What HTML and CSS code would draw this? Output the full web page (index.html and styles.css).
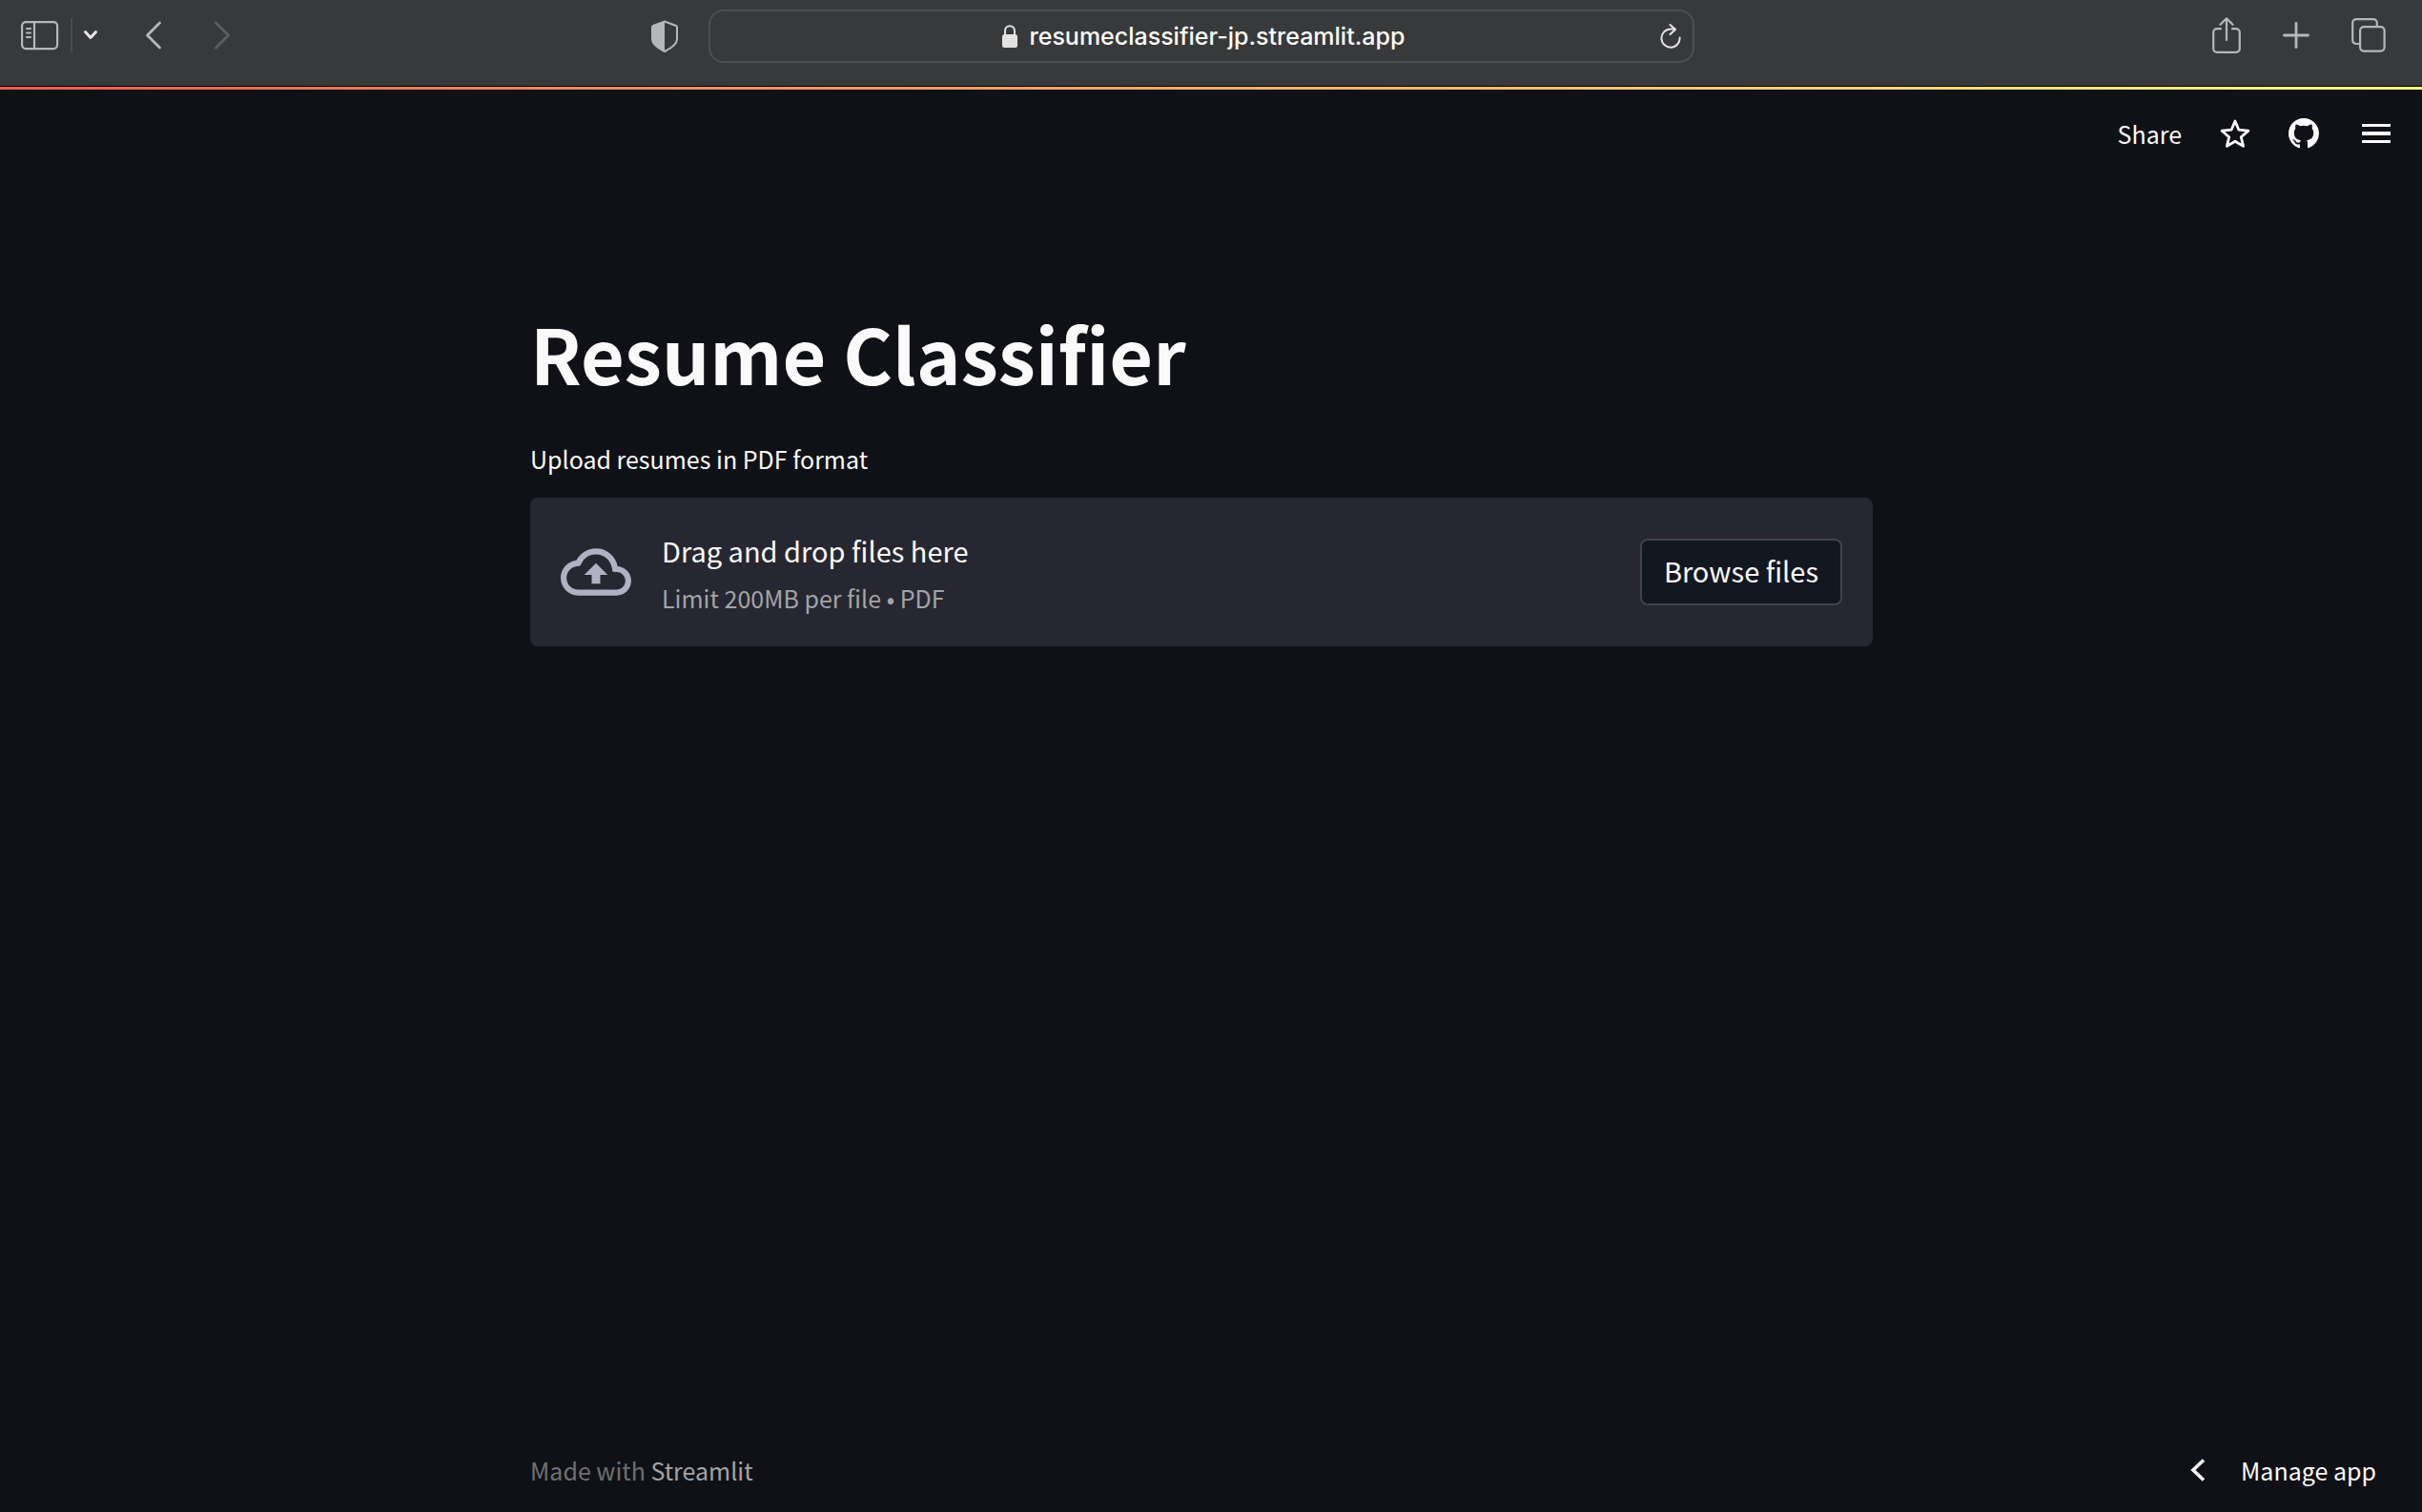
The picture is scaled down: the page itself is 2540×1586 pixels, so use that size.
FILE: index.html
```html
<!DOCTYPE html>
<html lang="en">
<head>
<meta charset="utf-8">
<meta name="viewport" content="width=device-width, initial-scale=1">
<title>Resume Classifier</title>
<link rel="stylesheet" href="styles.css">
</head>
<body>
<header class="browser">
  <div class="browser-start">
    <button class="icon-button" type="button" aria-label="Show sidebar">
      <svg width="40" height="32" viewBox="0 0 40 32" fill="none" stroke="currentColor" stroke-width="2.2"><rect x="1.1" y="2.1" width="37" height="28" rx="4"/><path d="M14 2v28M6 9h4M6 13.500h4M6 18h4" stroke-linecap="round"/></svg>
    </button>
    <span class="divider"></span>
    <button class="icon-button menu-arrow" type="button" aria-label="Sidebar menu">
      <svg width="16" height="12" viewBox="0 0 16 12" fill="none" stroke="currentColor" stroke-width="3" stroke-linecap="round" stroke-linejoin="round"><path d="M2.500 2.500 8 8.500l5.500-6"/></svg>
    </button>
    <button class="icon-button back" type="button" aria-label="Back">
      <svg width="18" height="30" viewBox="0 0 18 30" fill="none" stroke="currentColor" stroke-width="2.800" stroke-linecap="round" stroke-linejoin="round"><path d="M15.500 2 2.500 15l13 13"/></svg>
    </button>
    <button class="icon-button forward" type="button" aria-label="Forward" disabled>
      <svg width="18" height="30" viewBox="0 0 18 30" fill="none" stroke="currentColor" stroke-width="2.800" stroke-linecap="round" stroke-linejoin="round"><path d="m2.500 2 13 13-13 13"/></svg>
    </button>
  </div>
  <div class="browser-center">
    <button class="icon-button" type="button" aria-label="Privacy report">
      <svg width="28" height="34" viewBox="0 0 28 34"><path d="M14 1.500 26 6q1 .4 1 1.500V20c0 5-5 9-13 13C6 29 1 25 1 20V7.500Q1 6.400 2 6Z" fill="none" stroke="currentColor" stroke-width="2"/><path d="M14 1v32C6 29 1 25 1 20V7.500Q1 6.400 2 6Z" fill="currentColor"/></svg>
    </button>
    <div class="address">
      <div class="address-text">
        <svg class="lock" width="16" height="24" viewBox="0 0 16 24"><rect y="10" width="16" height="14" rx="2.500" fill="currentColor"/><path d="M3 11V6.500C3 3.500 5 1.200 8 1.200s5 2.300 5 5.300V11" fill="none" stroke="currentColor" stroke-width="2"/></svg>
        <input class="url" type="text" aria-label="Address" value="resumeclassifier-jp.streamlit.app">
      </div>
      <button class="icon-button reload" type="button" aria-label="Reload">
        <svg width="22" height="26" viewBox="0 0 22 26" fill="none" stroke="currentColor" stroke-width="2" stroke-linecap="round" stroke-linejoin="round"><path d="M20.600 14.500a9.600 9.600 0 1 1-9.600-9H16M10.500 1l5.500 5-5.500 5"/></svg>
      </button>
    </div>
  </div>
  <div class="browser-end">
    <button class="icon-button" type="button" aria-label="Share page">
      <svg width="30" height="38" viewBox="0 0 30 38" fill="none" stroke="currentColor" stroke-width="2.200" stroke-linecap="round" stroke-linejoin="round"><path d="M9 12.200H5a3.800 3.800 0 0 0-3.800 3.800v17A3.800 3.800 0 0 0 5 36.800h20a3.800 3.800 0 0 0 3.800-3.800V16a3.800 3.800 0 0 0-3.800-3.800h-4M15 24V2M8.500 7.800 15 1.300l6.500 6.500"/></svg>
    </button>
    <button class="icon-button" type="button" aria-label="New tab">
      <svg width="28" height="28" viewBox="0 0 28 28" fill="none" stroke="currentColor" stroke-width="2.800" stroke-linecap="round"><path d="M14 1.500v25M1.500 14h25"/></svg>
    </button>
    <button class="icon-button" type="button" aria-label="Show all tabs">
      <svg width="36" height="36" viewBox="0 0 36 36" fill="none" stroke="currentColor" stroke-width="2.200"><rect x="9.100" y="9.100" width="25.500" height="25.500" rx="4"/><path d="M9 27H5a3.800 3.800 0 0 1-3.800-3.800V5A3.800 3.800 0 0 1 5 1.200h18A3.800 3.800 0 0 1 26.800 5v4"/></svg>
    </button>
  </div>
</header>
<div class="decoration"></div>
<nav class="app-bar" aria-label="App">
  <button class="app-button" type="button">Share</button>
  <button class="app-button" type="button" aria-label="Favorite">
    <svg width="32" height="32" viewBox="0 0 32 32" fill="none" stroke="currentColor" stroke-width="2.800" stroke-linejoin="round"><path d="m16 3 3.900 9.200 10 .9-7.600 6.600 2.300 9.700-8.600-5.200-8.600 5.200 2.300-9.700-7.600-6.600 10-.9Z"/></svg>
  </button>
  <a class="app-button" href="#" aria-label="View source on GitHub">
    <svg width="32" height="32" viewBox="0 0 16 16" fill="currentColor"><path d="M8 0C3.580 0 0 3.580 0 8c0 3.540 2.290 6.530 5.470 7.590.4.070.55-.17.55-.38 0-.19-.01-.82-.01-1.490-2.010.37-2.530-.49-2.690-.94-.09-.23-.48-.94-.82-1.130-.28-.15-.68-.52-.01-.53.63-.01 1.080.58 1.230.82.72 1.210 1.870.87 2.330.66.07-.52.28-.87.51-1.070-1.780-.2-3.640-.89-3.640-3.950 0-.87.31-1.590.82-2.150-.08-.2-.36-1.020.08-2.120 0 0 .67-.21 2.200.82.64-.18 1.320-.27 2-.27s1.360.09 2 .27c1.530-1.040 2.200-.82 2.200-.82.44 1.100.16 1.920.08 2.120.51.56.82 1.270.82 2.150 0 3.070-1.870 3.750-3.650 3.950.29.25.54.73.54 1.480 0 1.070-.01 1.930-.01 2.200 0 .21.15.46.55.38A8.010 8.010 0 0 0 16 8c0-4.420-3.580-8-8-8"/></svg>
  </a>
  <button class="app-button menu" type="button" aria-label="Main menu">
    <svg width="30" height="20" viewBox="0 0 30 20" fill="currentColor"><path d="M0 0h30v3H0zM0 8h30v4H0zM0 17h30v3H0z"/></svg>
  </button>
</nav>
<main class="page-grid main">
  <div class="column">
    <h1 class="title">Resume Classifier</h1>
    <label class="label" for="browse">Upload resumes in PDF format</label>
    <section class="dropzone">
      <svg class="cloud" width="74" height="74" viewBox="0 0 24 24" fill="currentColor"><path d="M19.350 10.040A7.490 7.490 0 0 0 12 4C9.110 4 6.600 5.640 5.350 8.040A5.994 5.994 0 0 0 0 14c0 3.310 2.690 6 6 6h13c2.760 0 5-2.240 5-5 0-2.640-2.050-4.780-4.650-4.960zM19 18H6c-2.210 0-4-1.790-4-4 0-2.050 1.530-3.760 3.560-3.970l1.070-.11.500-.95A5.469 5.469 0 0 1 12 6c2.620 0 4.880 1.860 5.390 4.430l.300 1.500 1.530.11A2.980 2.980 0 0 1 22 15c0 1.650-1.350 3-3 3zM8 13h2.550v3h2.900v-3H16l-4-4z"/></svg>
      <div class="instructions">
        <span class="drop-text">Drag and drop files here</span>
        <small class="limit">Limit 200MB per file • PDF</small>
      </div>
      <button class="browse" id="browse" type="button">Browse files</button>
    </section>
  </div>
</main>
<footer class="page-grid footer">
  <p class="credit">Made with <a href="#">Streamlit</a></p>
  <button class="manage" type="button">
    <svg width="16" height="24" viewBox="0 0 16 24" fill="none" stroke="currentColor" stroke-width="3.600"><path d="M14 1.500 3 12l11 10.500"/></svg>
    Manage app
  </button>
</footer>
</body>
</html>
```
FILE: styles.css
```css
* {
  box-sizing: border-box;
}

body {
  display: flex;
  flex-direction: column;
  min-height: 100vh;
  margin: 0;
  background: #0f1116;
  color: #fafafa;
  font-family: "Source Sans Pro", "Noto Sans CJK JP", sans-serif;
  font-size: 25px;
  line-height: 40px;
}

svg {
  display: block;
  flex: none;
}

button {
  padding: 0;
  border: 0;
  background: none;
  color: inherit;
  font: inherit;
}

/* Browser toolbar */
.browser {
  display: grid;
  grid-template-columns: 683fr 1094fr 763fr;
  align-items: start;
  height: 91px;
  padding-top: 10px;
  border-bottom: 1px solid #000;
  background: #38393a;
  color: #b6b7b8;
}

.browser-start,
.browser-center,
.browser-end {
  display: flex;
  align-items: center;
}

.browser-start,
.browser-end {
  height: 54px;
}

.browser-start {
  padding-left: 22px;
}

.divider {
  width: 2px;
  height: 36px;
  margin: 0 11px 0 12px;
  background: #4b4c4e;
}

.menu-arrow {
  color: #e6e6e6;
}

.back {
  margin-left: 49px;
}

.forward {
  margin-left: 54px;
  color: #5d5e60;
}

.browser-center {
  gap: 32px;
}

.address {
  display: flex;
  flex: 1;
  align-items: center;
  height: 56px;
  padding-right: 12px;
  border: 2px solid #4e4f51;
  border-radius: 16px;
  color: #e2e2e2;
}

.address-text {
  display: flex;
  flex: 1;
  align-items: center;
  justify-content: center;
  gap: 13px;
  padding-left: 44px;
}

.url {
  width: 400px;
  padding: 0;
  border: 0;
  background: none;
  color: #fff;
  font: 500 25px/40px Inter, sans-serif;
}

.browser-end {
  justify-content: flex-end;
  gap: 44px;
  padding-right: 38px;
}

.decoration {
  height: 3px;
  background: linear-gradient(90deg, #e95c4c, #ee8c60 27%, #f7c56c 68%, #fffd80);
}

/* App toolbar */
.app-bar {
  display: flex;
  align-items: center;
  justify-content: flex-end;
  gap: 40px;
  height: 92px;
  padding-right: 33px;
}

.app-button {
  color: inherit;
}

.menu {
  margin-left: 5px;
}

/* Shared page columns: margin, content, margin, scrollbar gutter */
.page-grid {
  display: grid;
  grid-template-columns: 1fr minmax(0, 1408px) 1fr 20px;
}

.main {
  flex: 1;
  padding-top: 129px;
}

.column {
  grid-column: 2;
}

.title {
  margin: 0 0 36px;
  font-size: 79px;
  font-weight: 700;
  line-height: 110px;
  font-variant-ligatures: none;
}

.label {
  display: block;
  margin-bottom: 21px;
}

.dropzone {
  display: flex;
  align-items: center;
  gap: 32px;
  height: 156px;
  padding: 0 32px;
  border-radius: 8px;
  background: #262730;
}

.cloud {
  color: #b0b2c4;
}

.instructions {
  display: flex;
  flex: 1;
  flex-direction: column;
  gap: 10px;
  padding-top: 4px;
}

.drop-text {
  font-size: 29px;
}

.limit {
  color: #a3a4a7;
  font-size: 25px;
}

.browse {
  height: 70px;
  padding: 0 23px 4px;
  border: 2px solid #41434c;
  border-radius: 8px;
  background: #131720;
  font-size: 29px;
}

/* Footer */
.footer {
  align-items: center;
  padding-bottom: 24px;
}

.credit {
  grid-column: 2;
  margin: 0;
  color: #6f7074;
}

.credit a {
  color: #a3a4a7;
  text-decoration: none;
}

.manage {
  display: flex;
  grid-column: 3 / 5;
  align-items: center;
  justify-self: end;
  gap: 37px;
  padding-right: 48px;
}
```
